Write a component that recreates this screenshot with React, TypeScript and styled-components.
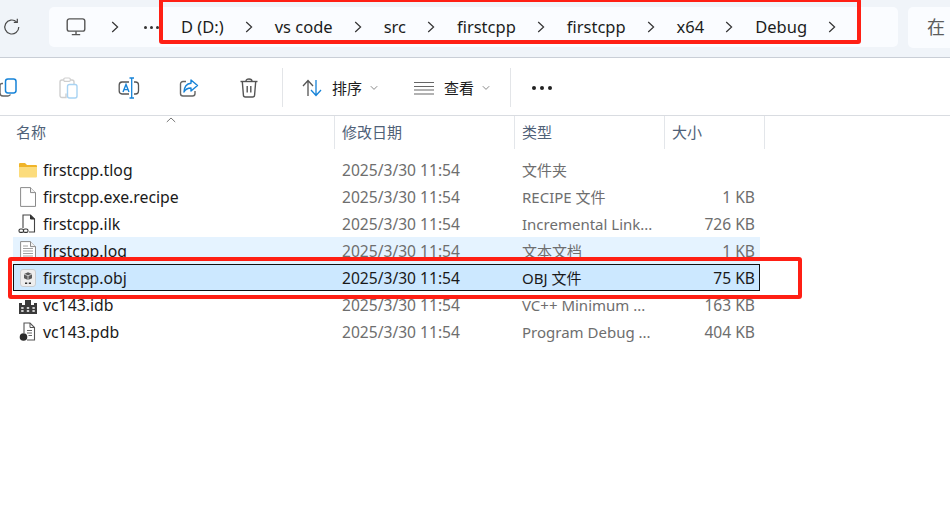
import React from "react";
import styled, { createGlobalStyle } from "styled-components";

const Global = createGlobalStyle`
  html, body { margin: 0; padding: 0; background: #fff; }
  body { font-family: "Noto Sans", "Noto Sans CJK SC", sans-serif; overflow: hidden; }
  * { box-sizing: border-box; }
`;

const Page = styled.div`
  position: relative;
  width: 950px;
  height: 511px;
  overflow: hidden;
  background: #fff;
`;

const AddressBar = styled.div`
  display: flex;
  align-items: center;
  height: 58px;
  padding: 0 0 3px 0;
  background: #f0f4f9;
  border-bottom: 1px solid #c9ced6;
`;
const Refresh = styled.div`
  flex: none;
  width: 49px;
  padding-left: 3px;
  display: flex;
`;
const Crumbs = styled.div`
  flex: none;
  display: flex;
  align-items: center;
  width: 849px;
  height: 40px;
  padding-left: 17px;
  background: #fafcff;
  border-radius: 5px;
`;
const Crumb = styled.span<{ $first?: boolean }>`
  margin-left: ${(p) => (p.$first ? 22 : 0)}px;
  font-size: 16.5px;
  line-height: 40px;
  color: #1c1c1c;
  white-space: nowrap;
`;
const Chev = styled.svg<{ $l?: number; $r?: number }>`
  flex: none;
  width: 8px;
  height: 12px;
  margin: 0 ${(p) => p.$r ?? 22}px 0 ${(p) => p.$l ?? 21}px;
`;
const Ellipsis = styled.div`
  display: flex;
  gap: 3px;
  flex: none;
`;
const SmallDot = styled.i`
  width: 3px;
  height: 3px;
  border-radius: 50%;
  background: #333;
`;
const SearchBox = styled.div`
  flex: none;
  margin-left: 10px;
  width: 60px;
  height: 41px;
  padding-left: 19px;
  background: #fafcff;
  border-radius: 5px;
  font-size: 18px;
  line-height: 41px;
  color: #5c5c5c;
`;

const Toolbar = styled.div`
  display: flex;
  align-items: center;
  height: 58px;
  padding-top: 2px;
  margin-left: -21px;
  border-bottom: 1px solid #d9dce1;
`;
const ToolBtn = styled.div`
  flex: none;
  width: 60px;
  display: flex;
  align-items: center;
  justify-content: center;
`;
const Divider = styled.div<{ $l: number }>`
  flex: none;
  width: 1px;
  height: 39px;
  margin-left: ${(p) => p.$l}px;
  background: #e3e5e8;
`;
const Labeled = styled.div<{ $w: number; $ml: number }>`
  flex: none;
  display: flex;
  align-items: center;
  width: ${(p) => p.$w}px;
  margin-left: ${(p) => p.$ml}px;
`;
const ToolLabel = styled.span<{ $ml: number }>`
  margin-left: ${(p) => p.$ml}px;
  font-size: 15px;
  color: #1c1c1c;
  white-space: nowrap;
`;
const Caret = styled.svg`
  margin-left: 8px;
  width: 8px;
  height: 6px;
`;
const Dots = styled.div`
  margin-left: 21px;
  display: flex;
  gap: 4px;
`;
const Dot = styled.i`
  width: 4px;
  height: 4px;
  border-radius: 50%;
  background: #222;
`;

const Header = styled.div`
  position: relative;
  display: grid;
  grid-template-columns: 335px 180px 150px 100px;
  height: 33px;
`;
const HeadCell = styled.div`
  padding-left: 7px;
  font-size: 15px;
  line-height: 33px;
  color: #4f6178;
  border-right: 1px solid #e3e6ea;
  &:first-child { padding-left: 16px; }
`;
const SortMark = styled.svg`
  position: absolute;
  left: 166px;
  top: 1px;
  width: 10px;
  height: 6px;
`;

const List = styled.div`
  margin: 7px 0 0 13px;
  width: 747px;
`;
const Row = styled.div<{ $state?: "hover" | "sel" }>`
  display: grid;
  grid-template-columns: 322px 180px 150px 90px;
  align-items: center;
  height: 27px;
  font-size: 15.6px;
  color: ${(p) => (p.$state === "sel" ? "#1a1a1a" : "#6e6e6e")};
  background: ${(p) => (p.$state === "sel" ? "#cce8ff" : p.$state === "hover" ? "#e5f3ff" : "transparent")};
  outline: ${(p) => (p.$state === "sel" ? "1px solid #111" : "none")};
  outline-offset: -1px;
`;
const NameCell = styled.div`
  display: flex;
  align-items: center;
  padding-left: 5px;
  font-size: 15.8px;
  color: #1a1a1a;
  white-space: nowrap;
`;
const IconSlot = styled.span`
  flex: none;
  width: 25px;
  height: 20px;
  display: flex;
  align-items: center;
`;
const DateCell = styled.div`
  padding-left: 7px;
  white-space: nowrap;
`;
const TypeCell = styled.div`
  padding-left: 7px;
  font-size: 15px;
  white-space: nowrap;
`;
const SizeCell = styled.div`
  text-align: right;
  white-space: nowrap;
`;

const RedBox = styled.div<{ $x: number; $y: number; $w: number; $h: number }>`
  position: absolute;
  left: ${(p) => p.$x}px;
  top: ${(p) => p.$y}px;
  width: ${(p) => p.$w}px;
  height: ${(p) => p.$h}px;
  border: 4px solid #ff1f14;
  border-radius: 3px;
  pointer-events: none;
`;

const Chevron = (p: { $l?: number; $r?: number }) => (
  <Chev {...p} viewBox="0 0 8 12">
    <path d="M1.2 1 L6.6 6 L1.2 11" fill="none" stroke="#333" strokeWidth="1.2" />
  </Chev>
);

const IconRefresh = () => (
  <svg width="18" height="18" viewBox="0 0 18 18" fill="none" stroke="#4a4a4a" strokeWidth="1.2">
    <path d="M15.8 9 A7 7 0 1 1 13.6 3.9" />
    <path d="M14.3 0.8 V4.4 H10.8" />
  </svg>
);
const IconPC = () => (
  <svg width="20" height="18" viewBox="0 0 20 18" fill="none" stroke="#555" strokeWidth="1.4">
    <rect x="1.2" y="0.9" width="17.6" height="12.2" rx="2.2" />
    <path d="M10 13.2 V16.4 M5.8 16.6 H14.2" />
  </svg>
);
const IconCopy = () => (
  <svg width="20" height="20" viewBox="0 0 20 20" fill="none">
    <path d="M4 5.5 H3 A2 2 0 0 0 1 7.5 V15 A3 3 0 0 0 4 18 H9 A3 3 0 0 0 11.5 16.5" stroke="#666" strokeWidth="1.4" />
    <rect x="6.5" y="1" width="10.5" height="14" rx="2.4" stroke="#1683d8" strokeWidth="1.5" fill="#fff" />
  </svg>
);
const IconPaste = () => (
  <svg width="20" height="22" viewBox="0 0 20 22" fill="none">
    <path d="M7 16.5 V20.5 H3 A2 2 0 0 1 1 18.5 V5 A2 2 0 0 1 3 3 H13 A2 2 0 0 1 15 5 V7" stroke="#cfcfcf" strokeWidth="1.4" />
    <rect x="4.8" y="1" width="6.5" height="3.4" rx="1.2" stroke="#cfcfcf" strokeWidth="1.2" fill="#fff" />
    <rect x="8.5" y="7.5" width="9.5" height="13.5" rx="2" stroke="#a8d3f3" strokeWidth="1.4" fill="#fff" />
  </svg>
);
const IconRename = () => (
  <svg width="22" height="22" viewBox="0 0 22 22" fill="none">
    <path d="M11 5 H4 A3 3 0 0 0 1.2 8 V14 A3 3 0 0 0 4 17 H11 M16 5 H17.5 A3 3 0 0 1 20.5 8 V14 A3 3 0 0 1 17.5 17 H16" stroke="#555" strokeWidth="1.3" />
    <path d="M11.5 1 H16 M13.7 1 V21 M11.5 21 H16" stroke="#1683d8" strokeWidth="1.3" />
    <path d="M5 15 L8 7.5 L11 15 M6 12.6 H10" stroke="#1683d8" strokeWidth="1.4" />
  </svg>
);
const IconShare = () => (
  <svg width="20" height="20" viewBox="0 0 20 20" fill="none">
    <path d="M7 3.5 H4 A2.5 2.5 0 0 0 1.5 6 V15.5 A2.5 2.5 0 0 0 4 18 H13.5 A2.5 2.5 0 0 0 16 15.5 V13" stroke="#666" strokeWidth="1.4" />
    <path d="M12 2 L18.5 7.5 L12 13 V10 C9 10 6.5 11 5 14 C5.2 9 8 5.6 12 5.2 Z" stroke="#1683d8" strokeWidth="1.4" strokeLinejoin="round" fill="#fff" />
  </svg>
);
const IconTrash = () => (
  <svg width="18" height="20" viewBox="0 0 18 20" fill="none" stroke="#555" strokeWidth="1.4">
    <path d="M0.5 3.5 H17.5" />
    <path d="M6 3.2 C6 1.6 7 1 9 1 C11 1 12 1.6 12 3.2" />
    <path d="M2.3 3.5 L3.4 17 A2 2 0 0 0 5.4 19 H12.6 A2 2 0 0 0 14.6 17 L15.7 3.5" />
    <path d="M7.2 8 V14.5 M10.8 8 V14.5" />
  </svg>
);
const IconSort = () => (
  <svg width="20" height="18" viewBox="0 0 20 18" fill="none" strokeWidth="1.3">
    <path d="M6 17 V2 M1 7 L6 1.5 L11 7" stroke="#555" />
    <path d="M14 1 V16 M9 11 L14 16.5 L19 11" stroke="#1683d8" />
  </svg>
);
const IconView = () => (
  <svg width="20" height="14" viewBox="0 0 20 14" fill="none">
    <path d="M0 1.5 H20 M0 5.5 H20 M0 9 H20 M0 13 H20" stroke="#666" strokeWidth="1.2" />
  </svg>
);
const IconCaret = () => (
  <Caret viewBox="0 0 8 6">
    <path d="M0.8 1.2 L4 4.4 L7.2 1.2" fill="none" stroke="#888" strokeWidth="1" />
  </Caret>
);

const IconFolder = () => (
  <svg width="20" height="20" viewBox="0 0 20 20">
    <path d="M1 4 A1 1 0 0 1 2 3 H7 L9 5 H18 A1 1 0 0 1 19 6 V8 H1 Z" fill="#f0b429" />
    <path d="M1 7 H19 V16.5 A1 1 0 0 1 18 17.5 H2 A1 1 0 0 1 1 16.5 Z" fill="#fcdc7c" />
  </svg>
);
const FileBase = ({ children }: { children?: React.ReactNode }) => (
  <svg width="20" height="20" viewBox="0 0 20 20" fill="none">
    <path d="M2.6 0.6 H12.5 L17.5 5.6 V19.4 H2.6 Z" fill="#fff" stroke="#8a8a8a" strokeWidth="1" />
    <path d="M12.5 0.6 V5.6 H17.5" fill="#f2f2f2" stroke="#8a8a8a" strokeWidth="1" />
    {children}
  </svg>
);
const IconIlk = () => (
  <svg width="20" height="20" viewBox="0 0 20 20" fill="none">
    <path d="M5 14 V1 H12.5 L16.5 5 V18 H11" fill="#fff" stroke="#444" strokeWidth="1.1" />
    <path d="M12.5 1 V5 H16.5" fill="#333" stroke="#333" strokeWidth="1" />
    <rect x="1" y="15" width="4.5" height="3.4" rx="1.5" stroke="#333" strokeWidth="1.1" />
    <rect x="5.5" y="15" width="4.5" height="3.4" rx="1.5" stroke="#333" strokeWidth="1.1" />
  </svg>
);
const IconLog = () => (
  <FileBase>
    <path d="M5 5 H10 M5 7.5 H15 M5 10 H15 M5 12.5 H15 M5 15 H15" stroke="#a2a2a2" strokeWidth="1" />
  </FileBase>
);
const IconObj = () => (
  <svg width="20" height="20" viewBox="0 0 20 20" fill="none">
    <rect x="2.5" y="1.5" width="15" height="17" rx="2.5" fill="#eeeeee" stroke="#c6c6c6" strokeWidth="0.8" />
    <path d="M10 4.2 L14 6 V10.2 L10 12 L6 10.2 V6 Z" fill="#5a5a5a" />
    <path d="M6 6 L10 7.8 L14 6 M10 7.8 V12" stroke="#e8e8e8" strokeWidth="0.8" />
    <path d="M7 15.3 H9.2 M10.8 15.3 H13" stroke="#333" strokeWidth="1.4" />
  </svg>
);
const IconIdb = () => (
  <svg width="20" height="20" viewBox="0 0 20 20">
    <rect x="8.5" y="0" width="3" height="4" fill="#777" />
    <path d="M1 8 H4 V10 H7 V5 H13 V10 H16 V8 H19 V19 H1 Z" fill="#3a3a3a" />
    <path d="M3.2 13 H5.6 M8.8 13 H11.2 M14.4 13 H16.8 M3.2 16 H5.6 M8.8 16 H11.2 M14.4 16 H16.8" stroke="#fff" strokeWidth="1.4" />
  </svg>
);
const IconPdb = () => (
  <svg width="20" height="20" viewBox="0 0 20 20" fill="none">
    <path d="M6 11 V1 H12 L16.5 5.5 V18 H9" fill="#fff" stroke="#555" strokeWidth="1.1" />
    <path d="M12 1 V5.5 H16.5" stroke="#555" strokeWidth="1" />
    <path d="M9 8.5 H14 M9 11 H14 M10.5 13.5 H14" stroke="#666" strokeWidth="1" />
    <circle cx="5.5" cy="15" r="3.8" fill="#2a2a2a" />
  </svg>
);

const crumbs = ["D (D:)", "vs code", "src", "firstcpp", "firstcpp", "x64", "Debug"];

const rows: { name: string; icon: React.ReactNode; type: string; size: string; state?: "hover" | "sel" }[] = [
  { name: "firstcpp.tlog", icon: <IconFolder />, type: "文件夹", size: "" },
  { name: "firstcpp.exe.recipe", icon: <FileBase />, type: "RECIPE 文件", size: "1 KB" },
  { name: "firstcpp.ilk", icon: <IconIlk />, type: "Incremental Link...", size: "726 KB" },
  { name: "firstcpp.log", icon: <IconLog />, type: "文本文档", size: "1 KB", state: "hover" },
  { name: "firstcpp.obj", icon: <IconObj />, type: "OBJ 文件", size: "75 KB", state: "sel" },
  { name: "vc143.idb", icon: <IconIdb />, type: "VC++ Minimum ...", size: "163 KB" },
  { name: "vc143.pdb", icon: <IconPdb />, type: "Program Debug ...", size: "404 KB" },
];

export default function App() {
  return (
    <Page>
      <Global />
      <AddressBar>
        <Refresh>
          <IconRefresh />
        </Refresh>
        <Crumbs>
          <IconPC />
          <Chevron $l={25} $r={25} />
          <Ellipsis>
            <SmallDot /><SmallDot /><SmallDot />
          </Ellipsis>
          <Crumb $first>{crumbs[0]}</Crumb>
          {crumbs.slice(1).map((c, i) => (
            <React.Fragment key={i}>
              <Chevron />
              <Crumb>{c}</Crumb>
            </React.Fragment>
          ))}
          <Chevron />
        </Crumbs>
        <SearchBox>在</SearchBox>
      </AddressBar>
      <Toolbar>
        <ToolBtn><IconCopy /></ToolBtn>
        <ToolBtn><IconPaste /></ToolBtn>
        <ToolBtn><IconRename /></ToolBtn>
        <ToolBtn><IconShare /></ToolBtn>
        <ToolBtn><IconTrash /></ToolBtn>
        <Divider $l={3} />
        <Labeled $w={92} $ml={19}>
          <IconSort />
          <ToolLabel $ml={10}>排序</ToolLabel>
          <IconCaret />
        </Labeled>
        <Labeled $w={96} $ml={20}>
          <IconView />
          <ToolLabel $ml={10}>查看</ToolLabel>
          <IconCaret />
        </Labeled>
        <Divider $l={0} />
        <Dots>
          <Dot /><Dot /><Dot />
        </Dots>
      </Toolbar>
      <Header>
        <HeadCell>名称</HeadCell>
        <HeadCell>修改日期</HeadCell>
        <HeadCell>类型</HeadCell>
        <HeadCell>大小</HeadCell>
        <SortMark viewBox="0 0 10 6">
          <path d="M0.8 5 L5 1 L9.2 5" fill="none" stroke="#777" strokeWidth="1" />
        </SortMark>
      </Header>
      <List>
        {rows.map((r) => (
          <Row key={r.name} $state={r.state}>
            <NameCell>
              <IconSlot>{r.icon}</IconSlot>
              {r.name}
            </NameCell>
            <DateCell>2025/3/30 11:54</DateCell>
            <TypeCell>{r.type}</TypeCell>
            <SizeCell>{r.size}</SizeCell>
          </Row>
        ))}
      </List>
      <RedBox $x={159} $y={-2} $w={702} $h={46} />
      <RedBox $x={8} $y={257} $w={794} $h={42} />
    </Page>
  );
}
